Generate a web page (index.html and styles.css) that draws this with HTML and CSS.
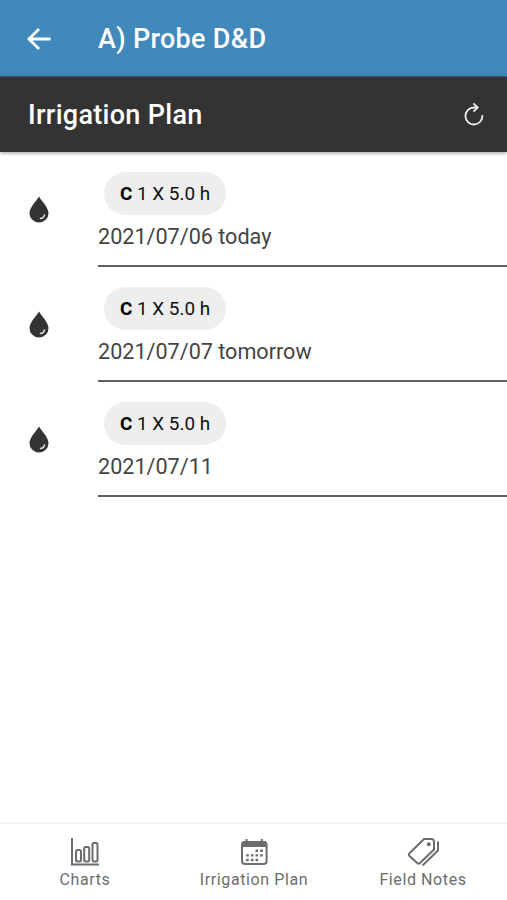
FILE: index.html
```html
<!DOCTYPE html>
<html>
<head>
<meta charset="utf-8">
<title>Irrigation Plan</title>
<link rel="stylesheet" href="styles.css">
</head>
<body>

<header class="header">
    <svg class="back" viewBox="0 0 24 22" width="24" height="22">
        <path d="M23.500 11H2.500M12 1L2 11l10 10"/>
    </svg>
    <h1>A) Probe D&amp;D</h1>
</header>

<div class="toolbar">
    <h2>Irrigation Plan</h2>
    <svg class="refresh" viewBox="0 0 20 24" width="20" height="24">
        <path d="M18.400 13.200A8.500 8.500 0 1 1 9.900 5.500H13.400"/>
        <path d="M9.500 1.300l4.200 4.200-4.200 4.200"/>
    </svg>
</div>

<main class="plan">
    <div class="item">
        <svg class="drop" viewBox="0 0 20 27" width="20" height="27">
            <path d="M10 .5C7 5.500.5 11.500.5 17.200a9.500 9.300 0 0 0 19 0C19.500 11.500 13 5.500 10 .5z"/>
            <path class="shine" d="M15.600 18.300c-.3 2.500-1.900 4-4.700 4.300"/>
        </svg>
        <div class="info">
            <span class="chip"><b>C</b> 1 X 5.0 h</span>
            <p>2021/07/06 today</p>
        </div>
    </div>
    <div class="item">
        <svg class="drop" viewBox="0 0 20 27" width="20" height="27">
            <path d="M10 .5C7 5.500.5 11.500.5 17.200a9.500 9.300 0 0 0 19 0C19.500 11.500 13 5.500 10 .5z"/>
            <path class="shine" d="M15.600 18.300c-.3 2.500-1.900 4-4.700 4.300"/>
        </svg>
        <div class="info">
            <span class="chip"><b>C</b> 1 X 5.0 h</span>
            <p>2021/07/07 tomorrow</p>
        </div>
    </div>
    <div class="item">
        <svg class="drop" viewBox="0 0 20 27" width="20" height="27">
            <path d="M10 .5C7 5.500.5 11.500.5 17.200a9.500 9.300 0 0 0 19 0C19.500 11.500 13 5.500 10 .5z"/>
            <path class="shine" d="M15.600 18.300c-.3 2.500-1.900 4-4.700 4.300"/>
        </svg>
        <div class="info">
            <span class="chip"><b>C</b> 1 X 5.0 h</span>
            <p>2021/07/11</p>
        </div>
    </div>
</main>

<nav class="tabs">
    <a class="tab">
        <svg viewBox="0 0 28 28" width="28" height="28">
            <path d="M1 0V26.500H28"/>
            <rect x="5" y="12" width="5" height="11.500" rx="1.500"/>
            <rect x="13.200" y="9" width="5" height="14.500" rx="1.500"/>
            <rect x="21.500" y="5" width="5" height="18.500" rx="1.500"/>
        </svg>
        <span>Charts</span>
    </a>
    <a class="tab">
        <svg viewBox="0 0 28 28" width="28" height="28">
            <rect x="2" y="4" width="24.600" height="22" rx="3"/>
            <path class="fill" d="M1.500 9V6a3 3 0 0 1 3-3h19.600a3 3 0 0 1 3 3v3z"/>
            <path d="M6.500 1v3M21.800 1v3"/>
            <path class="dots" d="M15.500 12.700h2.600M20.200 12.700h2.600M6.200 17.400h2.600M10.900 17.400h2.600M15.500 17.400h2.600M20.200 17.400h2.600M6.200 22h2.600M10.900 22h2.600M15.500 22h2.600"/>
        </svg>
        <span>Irrigation Plan</span>
    </a>
    <a class="tab">
        <svg viewBox="0 0 32 28" width="32" height="28">
            <path d="M17 1H24.500a2.500 2.500 0 0 1 2.500 2.500V11.500L13 25a2 2 0 0 1-2.800 0L2.500 18a2 2 0 0 1 0-2.800z"/>
            <path d="M31 3.500V12.500L15.500 27.500"/>
            <circle class="fill" cx="21.800" cy="6.200" r="2"/>
        </svg>
        <span>Field Notes</span>
    </a>
</nav>

</body>
</html>
```
FILE: styles.css
```css
body {
    display: flex;
    flex-direction: column;
    height: 900px;
    margin: 0;
    background-color: #fff;
    font-family: Roboto, sans-serif;
    color: #333;
    overflow: hidden;
}

h1, h2, p {
    margin: 0;
}

h1, h2 {
    color: #fff;
    font-size: 27px;
    font-weight: 500;
    line-height: 32px;
    letter-spacing: 0.3px;
}

.header {
    display: flex;
    align-items: center;
    box-sizing: border-box;
    height: 77px;
    padding: 1px 0 0 27px;
    background-color: #4188bb;
    border-bottom: 1px solid #356487;
}

.header h1 {
    margin-left: 47px;
}

svg {
    fill: none;
    stroke-width: 2;
}

.back {
    stroke: #fff;
    stroke-width: 2.8;
}

.toolbar {
    display: flex;
    align-items: center;
    justify-content: space-between;
    box-sizing: border-box;
    height: 75px;
    padding: 0 23px 0 28px;
    background-color: #333;
    box-shadow: 0 1px 4px rgba(0, 0, 0, 0.4);
}

.refresh {
    margin-bottom: 2px;
    stroke: #eee;
    stroke-width: 1.8;
}

.plan {
    flex: 1;
}

.item {
    display: flex;
    height: 115px;
}

.drop {
    margin: 44px 49px 0 29px;
    fill: #333;
}

.drop .shine {
    fill: none;
    stroke: #ddd;
    stroke-width: 1.5;
}

.info {
    flex: 1;
    box-sizing: border-box;
    padding-top: 20px;
    border-bottom: 2px solid #606060;
}

.chip {
    display: block;
    width: 122px;
    height: 43px;
    margin-left: 6px;
    border-radius: 22px;
    background-color: #eee;
    color: #111;
    font-size: 18.9px;
    line-height: 43px;
    text-align: center;
}

.chip b {
    color: #000;
}

.info p {
    margin-top: 7px;
    font-size: 21.6px;
    line-height: 30px;
    color: #444;
}

.tabs {
    display: grid;
    grid-template-columns: 1fr 1fr 1fr;
    height: 76px;
    border-top: 2px solid #f3f3f3;
}

.tab {
    display: flex;
    flex-direction: column;
    align-items: center;
    padding: 14px 0 0 1px;
    color: #6d6d6d;
    font-size: 16px;
    line-height: 20px;
    letter-spacing: 0.6px;
}

.tab svg {
    margin-bottom: 4px;
    stroke: #6d6d6d;
}

.tab .fill {
    fill: #6d6d6d;
    stroke: none;
}

.tab .dots {
    stroke-width: 2.4;
}
```
